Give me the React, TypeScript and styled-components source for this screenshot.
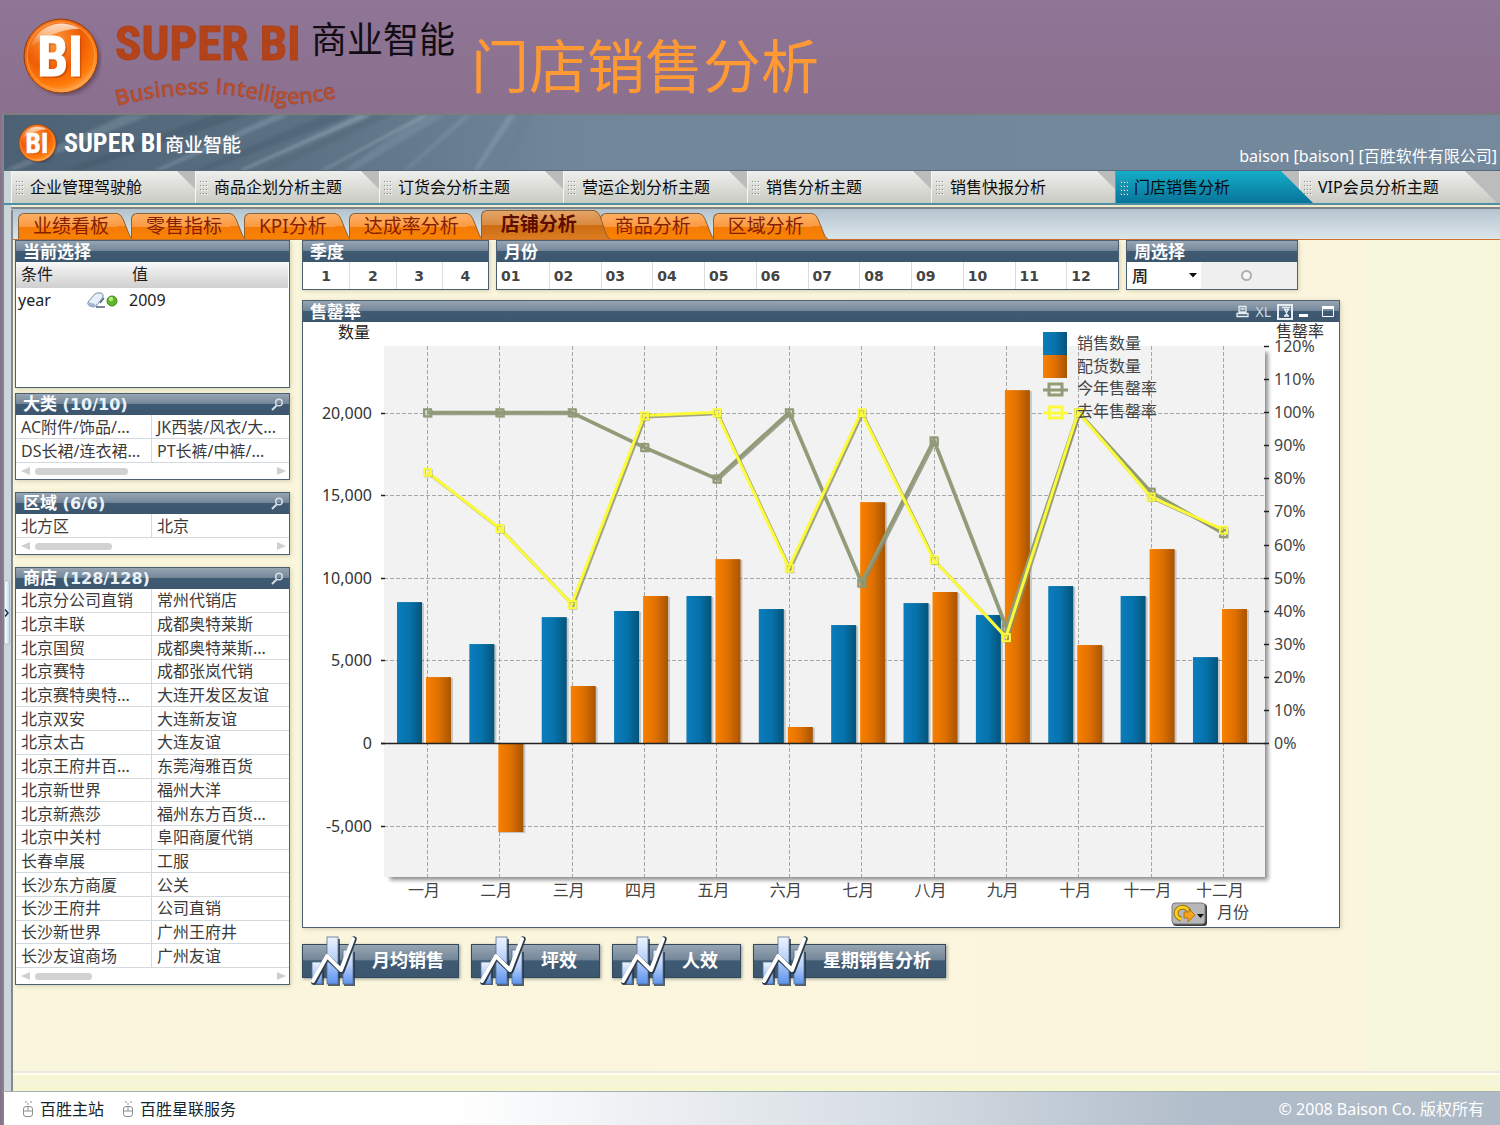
import React from "react";
import styled, { createGlobalStyle } from "styled-components";

const SANS = '"Noto Sans", "Noto Sans CJK SC", sans-serif';
const BOLD_SANS = '"DejaVu Sans", "Noto Sans CJK SC", sans-serif';
const CONDENSED =
  '"Roboto Condensed", "Liberation Sans Narrow", "DejaVu Sans Condensed", sans-serif';

const GlobalStyle = createGlobalStyle`
  *, *::before, *::after { box-sizing: border-box; }
  body { margin: 0; background: #8b7090; font: 16px/24px ${SANS}; color: #333; }
  button, select, input { font: inherit; color: inherit; margin: 0; }
  button { border: 0; padding: 0; background: none; cursor: pointer; }
  ul { list-style: none; margin: 0; padding: 0; }
  svg { display: block; }
`;

const Page = styled.div`
  display: flex;
  flex-direction: column;
  min-height: 100vh;
`;

/* ---------- Title strip ---------- */

const Hero = styled.header`
  display: flex;
  height: 113px;
  padding: 16px 22px 0;
  background: linear-gradient(#8f7696, #8b6f8e);
`;

const Brand = styled.div`
  display: flex;
  flex-direction: column;
  margin-left: 13px;
  width: 356px;
`;

const BrandRow = styled.div`
  display: flex;
  align-items: flex-start;
  height: 57px;
`;

const BrandName = styled.div`
  width: 196px;
  font: bold 49px/56px ${CONDENSED};
  color: #b5431a;
  white-space: nowrap;
  -webkit-text-stroke: 1px #a8421f;
`;

const BrandChinese = styled.div`
  font-size: 36px;
  line-height: 48px;
  color: #120c14;
  white-space: nowrap;
`;

const TaglineSvg = styled.svg`
  overflow: visible;
`;

const HeroTitle = styled.h1`
  margin: 16px 0 0;
  font-family: ${SANS};
  font-size: 58px;
  line-height: 68px;
  font-weight: 400;
  color: #ff9933;
  white-space: nowrap;
`;

/* ---------- Application frame ---------- */

const Frame = styled.div`
  display: flex;
  flex-direction: column;
  flex: 1;
  margin-left: 2px;
  border-top: 2px solid #7d7d80;
  border-left: 2px solid #808589;
  background: #ccd5da;
  overflow: hidden;
`;

const Banner = styled.div`
  position: relative;
  display: flex;
  align-items: center;
  height: 56px;
  padding: 0 3px 0 14px;
  background: linear-gradient(90deg, #4c6173, #5c7183 20%, #71869a 38%, #74899c);
  border-bottom: 1px solid #566b80;
`;

const Streaks = styled.svg`
  position: absolute;
  inset: 0;
  width: 640px;
  height: 55px;
`;

const BannerBrand = styled.div`
  position: relative;
  display: flex;
  align-items: center;
  flex: 1;
  color: #fff;
`;

const BannerName = styled.span`
  width: 101px;
  margin-left: 6px;
  font: bold 26px/36px ${CONDENSED};
  white-space: nowrap;
`;

const BannerChinese = styled.span`
  font-size: 19px;
  font-weight: 500;
  line-height: 24px;
  padding-top: 4px;
`;

const UserInfo = styled.span`
  position: relative;
  align-self: flex-end;
  padding-bottom: 2px;
  color: #fff;
  white-space: nowrap;
`;

const MainNav = styled.nav`
  display: flex;
  height: 34px;
  padding-left: 7px;
  background: linear-gradient(90deg, #ccd5da 7px, #bcbcbc 7px);
  border-bottom: 2px solid #4d8fa8;
  overflow: hidden;
`;

const NavTab = styled.button<{ $active?: boolean }>`
  position: relative;
  z-index: ${(p) => (p.$active ? 1 : 0)};
  display: flex;
  align-items: center;
  gap: 5px;
  flex: 0 0 198px;
  margin-right: -14px;
  padding-left: 4px;
  color: #0a0a0a;
  text-align: left;
  white-space: nowrap;
  border-left: 1px solid ${(p) => (p.$active ? "#2cb4cc" : "#f6f6f4")};
  background: ${(p) =>
    p.$active ? "linear-gradient(#14aec8, #0b7fa3 80%, #08759a)" : "linear-gradient(#eff0ec, #c9cac2)"};
  clip-path: polygon(0 0, 166px 0, 100% 100%, 0 100%);
`;

const NavRule = styled.div`
  height: 5px;
  margin-left: 7px;
  background: linear-gradient(#f4ecc8 2px, #7f858c 2px, #7f858c 4px, #b3c1cc 4px);
`;

const Body = styled.div`
  display: flex;
  flex: 1;
`;

const Rail = styled.div`
  display: flex;
  align-items: flex-start;
  width: 7px;
  padding-top: 370px;
`;

const RailHandle = styled.button`
  display: flex;
  align-items: center;
  width: 6px;
  height: 65px;
  border-radius: 3px;
  border: 1px solid #b9c0c6;
  background: linear-gradient(90deg, #fff, #c4def2);
`;

const Workspace = styled.div`
  display: flex;
  flex-direction: column;
  flex: 1;
  min-width: 0;
  border-left: 2px solid #868a8e;
`;

const SubTabs = styled.div`
  display: flex;
  align-items: flex-end;
  height: 30px;
  padding-left: 5px;
  background: linear-gradient(#b5c5d0, #dce6ea);
  border-bottom: 1px solid #d0702a;
`;

const tabFill = (active?: boolean) =>
  active
    ? "linear-gradient(#e3a468, #d98a3e 50%, #cb6c14 52%, #dd7d20)"
    : "linear-gradient(#fdb067, #fb9a41 50%, #f57b08 52%, #f98200)";

const SubTab = styled.button<{ $active?: boolean }>`
  position: relative;
  z-index: ${(p) => (p.$active ? 1 : 0)};
  display: flex;
  height: ${(p) => (p.$active ? 29 : 26)}px;
  margin-right: ${(p) => (p.$active ? -10 : -2)}px;
  font-size: 19px;
  line-height: 24px;
  font-weight: ${(p) => (p.$active ? 700 : 400)};
  color: ${(p) => (p.$active ? "#5c0d00" : "#861f00")};
  white-space: nowrap;
`;

const SubTabLabel = styled.span<{ $active?: boolean }>`
  height: 100%;
  padding: ${(p) => (p.$active ? "1px 17px 0 19px" : "0 8px 0 14px")};
  border: 1px solid #8a6238;
  border-width: 1px 0 0 1px;
  border-radius: 6px 0 0 0;
  background: ${(p) => tabFill(p.$active)};
`;

const Content = styled.main`
  display: flex;
  align-items: flex-start;
  gap: 12px;
  flex: 1;
  padding: 0 16px 80px 2px;
  background: linear-gradient(90deg, #faf6dc, #fbf5dd 1345px, #f4f7da 1365px);
`;

/* ---------- Panels ---------- */

const panelFill = "linear-gradient(#98a5b2, #75889a 45%, #3f5a73 50%, #3c566e)";

const PanelBox = styled.section`
  border: 1px solid #4b6073;
  background: #fff;
  box-shadow: 1px 1px 4px rgba(120, 120, 80, 0.3);
`;

const PanelHead = styled.div`
  display: flex;
  align-items: center;
  justify-content: space-between;
  height: 21px;
  padding: 0 5px 0 7px;
  background: ${panelFill};
  color: #fff;
`;

const PanelTitle = styled.h2`
  margin: 0;
  font: bold 17px/20px ${BOLD_SANS};
  white-space: nowrap;
`;

const Count = styled.span`
  font-size: 16px;
  color: #e9f2f8;
`;

const Tools = styled.div`
  display: flex;
  align-items: center;
  gap: 6px;
`;

const Sidebar = styled.aside`
  display: flex;
  flex-direction: column;
  flex: 0 0 275px;
  gap: 12px;
`;

const SideGroup = styled.div`
  display: flex;
  flex-direction: column;
  gap: 5px;
`;

const CurrentBody = styled.div`
  height: 125px;
  color: #1c1c1c;
`;

const CurrentTable = styled.table`
  width: 272px;
  border-collapse: collapse;
  table-layout: fixed;

  th {
    height: 26px;
    padding: 0 0 2px 5px;
    font-weight: 400;
    line-height: 22px;
    text-align: left;
  }
  thead tr { background: linear-gradient(#f8f8f8, #cfcfcf); }
  td { padding: 0 0 0 2px; height: 24px; }
`;

const YearRow = styled.div`
  display: flex;
  align-items: center;
  justify-content: space-between;
  padding-right: 9px;
`;

const ListGrid = styled.ul<{ $height?: number }>`
  display: grid;
  grid-template-columns: 136px 1fr;
  grid-auto-rows: ${(p) => (p.$height ? "minmax(0, 1fr)" : "24px")};
  height: ${(p) => (p.$height ? `${p.$height}px` : "auto")};
`;

const ListItem = styled.li`
  display: flex;
  align-items: center;
  padding-left: 5px;
  border-bottom: 1px solid #d3dadd;
  white-space: nowrap;
  overflow: hidden;
  color: #3b3b3b;

  &:nth-child(odd) { border-right: 1px solid #d3dadd; }
`;

const ScrollRow = styled.div`
  display: flex;
  align-items: center;
  gap: 5px;
  height: 16px;
  padding: 0 3px 0 5px;
`;

const Thumb = styled.span<{ $size: number }>`
  width: ${(p) => p.$size}px;
  height: 7px;
  margin-right: auto;
  border-radius: 4px;
  background: #d2d2d2;
`;

const Main = styled.div`
  flex: 1 1 auto;
  min-width: 0;
  max-width: 1038px;
`;

const Filters = styled.div`
  display: grid;
  grid-template-columns: 187px minmax(0, 623px) 172px;
  gap: 7px;
  margin-bottom: 10px;
`;

const Cells = styled.div<{ $count: number }>`
  display: grid;
  grid-template-columns: repeat(${(p) => p.$count}, minmax(0, 1fr));
  height: 27px;
`;

const Cell = styled.button<{ $center?: boolean }>`
  padding-left: ${(p) => (p.$center ? 0 : 4)}px;
  font: bold 14px/24px ${BOLD_SANS};
  text-align: ${(p) => (p.$center ? "center" : "left")};
  color: #444;

  & + & { border-left: 1px solid #d9dde0; }
`;

const WeekRow = styled.div`
  display: grid;
  grid-template-columns: 74px 1fr;
  height: 27px;
`;

const WeekSelectBox = styled.label`
  display: flex;
  align-items: center;
  padding-right: 4px;
`;

const WeekSelect = styled.select`
  flex: 1;
  min-width: 0;
  appearance: none;
  border: 0;
  padding: 0 0 0 5px;
  background: none;
  font-weight: 500;
  color: #222;
`;

const RadioCell = styled.label`
  display: flex;
  align-items: center;
  justify-content: center;
  padding-right: 6px;
  background: #efefef;
`;

const Radio = styled.input`
  appearance: none;
  width: 11px;
  height: 11px;
  border: 2px solid #aeb0b0;
  border-radius: 50%;
  background: #f8f8f8;
`;

const ExcelButton = styled.button`
  font-size: 14px;
  line-height: 18px;
  color: #cdd7df;
`;

const ChartSvg = styled.svg`
  width: 100%;
  height: auto;
  overflow: visible;
  font-family: ${SANS};
  font-size: 16px;
`;

const Actions = styled.div`
  display: flex;
  flex-wrap: wrap;
  gap: 12px;
  margin-top: 16px;
`;

const ActionButton = styled.button`
  position: relative;
  min-width: 129px;
  height: 34px;
  padding: 0 14px 2px 69px;
  border: 1px solid #33495c;
  background: ${panelFill};
  box-shadow: 1px 1px 3px rgba(80, 90, 100, 0.6);
  color: #fff;
  font-size: 18px;
  font-weight: 700;
  line-height: 24px;
  text-align: left;
  white-space: nowrap;
`;

const ActionIcon = styled.svg`
  position: absolute;
  left: 5px;
  top: -9px;
`;

const LowerBand = styled.div`
  height: 20px;
  border-top: 2px solid #e9e9e4;
  background: linear-gradient(#fffdf0 1px, #f5f6d0 3px, #f6f5dc 9px, #f5f7cb);
`;

const Footer = styled.footer`
  display: flex;
  align-items: center;
  gap: 18px;
  height: 34px;
  margin-left: 2px;
  padding: 0 16px 0 18px;
  border-top: 1px solid #a7b0b4;
  border-left: 2px solid #808589;
  background: linear-gradient(90deg, #fff 30%, #d5dce3 60%, #b1bdca 80%, #adbac6);
`;

const FooterLink = styled.a`
  display: flex;
  align-items: center;
  gap: 6px;
  color: #13262f;
  text-decoration: none;
`;

const Copyright = styled.span`
  margin-left: auto;
  color: #fff;
`;

/* ---------- Drawings ---------- */

function Badge({ size, id }: { size: number; id: string }) {
  return (
    <svg width={size} height={size} viewBox="0 0 80 80" role="img" aria-label="BI">
      <defs>
        <radialGradient id={`${id}-fill`} cx="0.4" cy="0.3" r="0.7">
          <stop offset="0" stopColor="#ff9a3a" />
          <stop offset="0.55" stopColor="#ee5d06" />
          <stop offset="0.85" stopColor="#ff7c0a" />
          <stop offset="1" stopColor="#ffa046" />
        </radialGradient>
        <linearGradient id={`${id}-shine`} x1="0" y1="0" x2="0" y2="1">
          <stop offset="0" stopColor="#fff" stopOpacity="0.75" />
          <stop offset="1" stopColor="#fff" stopOpacity="0" />
        </linearGradient>
        <filter id={`${id}-soft`} x="-20%" y="-20%" width="140%" height="140%">
          <feGaussianBlur stdDeviation="2" />
        </filter>
      </defs>
      <circle cx="42" cy="43" r="36" fill="#3a2030" opacity="0.5" filter={`url(#${id}-soft)`} />
      <circle cx="39" cy="40" r="37" fill={`url(#${id}-fill)`} stroke="#8f3f10" strokeWidth="1" />
      <circle cx="39" cy="40" r="34" fill="none" stroke="#ffb066" strokeWidth="1.5" opacity="0.5" />
      <path d="M8 32 A33 33 0 0 1 58 13 Q34 12 8 32Z" fill={`url(#${id}-shine)`} />
      <text x="40" y="62" fontSize="55" fontWeight="bold" textAnchor="middle" fill="#b83c00" opacity="0.5" fontFamily={CONDENSED}>
        BI
      </text>
      <text x="38" y="60" fontSize="55" fontWeight="bold" textAnchor="middle" fill="#fff" stroke="#fff" fontFamily={CONDENSED}>
        BI
      </text>
    </svg>
  );
}

function Tagline() {
  return (
    <TaglineSvg width="240" height="40" viewBox="0 0 240 40">
      <path id="tagline-wave" d="M2 33 C36 24 66 21 100 21 C130 22 148 30 175 31 C195 31 210 28 240 20" fill="none" />
      <text fontFamily='"Open Sans", "Noto Sans", sans-serif' fontSize="22" fontWeight="600" fill="#c24f22" stroke="#7c4a5c" strokeWidth="0.4">
        <textPath href="#tagline-wave">Business Intelligence</textPath>
      </text>
    </TaglineSvg>
  );
}

function BannerStreaks() {
  const lines: [number, number, number, string, number][] = [
    [0, 26, 120, "#8ea4b5", 0.35],
    [60, 34, 150, "#3d5060", 0.35],
    [150, 16, 120, "#9ab0c2", 0.35],
    [190, 30, 130, "#40566a", 0.35],
    [235, 12, 120, "#a5b9ca", 0.45],
    [258, 20, 110, "#4a6074", 0.35],
    [318, 6, 100, "#a9bccb", 0.5],
    [340, 22, 80, "#879cb0", 0.35],
    [400, 8, 60, "#8fa4b6", 0.3],
    [470, 8, 34, "#93a8b9", 0.4],
    [494, 10, 26, "#64798c", 0.3],
  ];
  return (
    <Streaks viewBox="0 0 640 55" aria-hidden="true">
      <filter id="streak-soft">
        <feGaussianBlur stdDeviation="1.5" />
      </filter>
      <g filter="url(#streak-soft)">
        {lines.map(([x, w, slope, color, opacity]) => (
          <path key={x} d={`M${x} 55 L${x + slope} 0 H${x + slope + w} L${x + w / 2} 55Z`} fill={color} opacity={opacity} />
        ))}
      </g>
    </Streaks>
  );
}

const Grip = () => (
  <svg width="9" height="15" viewBox="0 0 9 15" aria-hidden="true">
    {[0, 3, 6].map((x) =>
      [1, 5, 9, 13].map((y) => (
        <g key={`${x}-${y}`}>
          <rect x={x} y={y} width="1" height="1" fill="#8c8c88" />
          <rect x={x + 1} y={y + 1} width="1" height="1" fill="#fff" />
        </g>
      ))
    )}
  </svg>
);

function Slant({ active }: { active?: boolean }) {
  const id = active ? "slant-active" : "slant";
  const h = active ? 29 : 26;
  const c = active ? ["#e3a468", "#d98a3e", "#cb6c14", "#dd7d20"] : ["#fdb067", "#fb9a41", "#f57b08", "#f98200"];
  return (
    <svg width="16" height={h} viewBox={`0 0 16 ${h}`} aria-hidden="true">
      <linearGradient id={id} x1="0" y1="0" x2="0" y2="1">
        <stop offset="0" stopColor={c[0]} />
        <stop offset="0.5" stopColor={c[1]} />
        <stop offset="0.52" stopColor={c[2]} />
        <stop offset="1" stopColor={c[3]} />
      </linearGradient>
      <path d={`M0 0 Q4 1 6 6 L12 ${h - 5} Q13 ${h - 1} 16 ${h} H0Z`} fill={`url(#${id})`} />
      <path d={`M0 0.5 Q4 1 6 6 L12 ${h - 5} Q13 ${h - 1} 16 ${h}`} fill="none" stroke="#8a6238" />
    </svg>
  );
}

const SearchIcon = () => (
  <svg width="13" height="13" viewBox="0 0 13 13" aria-hidden="true">
    <circle cx="8" cy="4.5" r="3.3" fill="none" stroke="#d6dfe7" strokeWidth="1.5" />
    <path d="M5.5 7.5 L1 12" stroke="#d6dfe7" strokeWidth="2" />
  </svg>
);

const Arrow = ({ left }: { left?: boolean }) => (
  <svg width="9" height="8" viewBox="0 0 9 8" aria-hidden="true">
    <path d={left ? "M9 0 L0 4 L9 8Z" : "M0 0 L9 4 L0 8Z"} fill="#cfcfcf" />
  </svg>
);

const Eraser = () => (
  <svg width="31" height="17" viewBox="0 0 31 17" aria-hidden="true">
    <path d="M1 10 L8 2 Q9 1 11 1 L14 1 Q17 2 16 5 L10 13 Q8 15 6 15 L3 14 Q0 13 1 10Z" fill="#e9eff8" stroke="#7189a8" />
    <path d="M1 10 L8 12 L8 15 L3 14Z" fill="#a3b6d2" />
    <path d="M9 15 H18 M13 11 L17 6" stroke="#4c6078" strokeWidth="1.3" fill="none" />
    <circle cx="25" cy="9" r="5" fill="#5fb52a" stroke="#3f8b1b" />
    <circle cx="24" cy="7" r="2.2" fill="#b4ea86" />
  </svg>
);

const MouseIcon = () => (
  <svg width="12" height="16" viewBox="0 0 12 16" fill="none" stroke="#8a8f92" aria-hidden="true">
    <path d="M3 1 H6 M8 1 H10 M6 2 V5" strokeDasharray="2 1" />
    <path d="M1.5 8 Q1.5 5.5 4 5.5 H8 Q10.5 5.5 10.5 8 V13 Q10.5 15.5 8 15.5 H4 Q1.5 15.5 1.5 13Z M1.5 10 H10.5 M6 5.5 V10" />
  </svg>
);

function StatsIcon() {
  return (
    <ActionIcon width="56" height="52" viewBox="0 0 54 52" aria-hidden="true">
      <defs>
        <linearGradient id="stat-bar" x1="0" y1="0" x2="0" y2="1">
          <stop offset="0" stopColor="#eef4ff" />
          <stop offset="0.5" stopColor="#b4cdf8" />
          <stop offset="1" stopColor="#5c93ef" />
        </linearGradient>
      </defs>
      <g fill="#1e2f45" opacity="0.75">
        <rect x="4" y="28" width="11" height="21" />
        <rect x="19" y="3" width="12" height="47" />
        <rect x="35" y="16" width="11" height="34" />
      </g>
      <g fill="url(#stat-bar)" stroke="#56708f" strokeWidth="0.8">
        <rect x="3" y="26" width="10" height="22" />
        <rect x="18" y="1" width="11" height="47" />
        <rect x="34" y="14" width="10" height="34" />
      </g>
      <path d="M5 46 L18 21 L33 35 L45 3" fill="none" stroke="#2d3a48" strokeWidth="5.5" strokeLinecap="round" strokeLinejoin="round" />
      <path d="M4 45 L18 20 L32 34 L44 3" fill="none" stroke="#fff" strokeWidth="4" strokeLinecap="round" strokeLinejoin="round" />
    </ActionIcon>
  );
}

/* ---------- Chart ---------- */

const MONTHS = ["一月", "二月", "三月", "四月", "五月", "六月", "七月", "八月", "九月", "十月", "十一月", "十二月"];
const SOLD = [8530, 5990, 7620, 7990, 8900, 8110, 7140, 8470, 7750, 9500, 8900, 5200];
const SHIPPED = [3990, -5390, 3450, 8900, 11130, 970, 14580, 9140, 21360, 5930, 11740, 8110];
const THIS_YEAR = [100, 100, 100, 89.5, 80, 100, 48.5, 91.5, 35, 100, 76, 63.5];
const LAST_YEAR = [82, 65, 42, 99, 100, 53, 100, 55.5, 32, 100, 74.5, 64.5];

const ZERO = 421;
const monthX = (i: number) => 124 + i * 72.36;
const qtyY = (v: number) => ZERO - v * 0.01652;
const rateY = (v: number) => ZERO - v * 3.308;
const points = (rates: number[]) => rates.map((r, i) => `${monthX(i)},${rateY(r)}`).join(" ");

function Bar({ x, value, fill }: { x: number; value: number; fill: string }) {
  const top = Math.min(qtyY(value), ZERO);
  const height = Math.abs(qtyY(value) - ZERO);
  return (
    <>
      <rect x={x + 1} y={top + 1} width="26" height={height} fill="#000" opacity="0.18" />
      <rect x={x} y={top} width="25" height={height} fill={fill} />
    </>
  );
}

function Line({ rates, color, shadow, width }: { rates: number[]; color: string; shadow: string; width: number }) {
  return (
    <g fill="none">
      <polyline points={points(rates)} stroke={shadow} strokeWidth={width} transform="translate(1.5 1.5)" opacity="0.8" />
      <polyline points={points(rates)} stroke={color} strokeWidth={width} />
      {rates.map((r, i) => (
        <g key={i}>
          <rect x={monthX(i) - 2} y={rateY(r) - 2} width="7" height="7" stroke={shadow} opacity="0.7" />
          <rect x={monthX(i) - 3} y={rateY(r) - 3} width="7" height="7" stroke={color} strokeWidth="2" />
        </g>
      ))}
    </g>
  );
}

function Chart() {
  return (
    <ChartSvg viewBox="0 0 1036 605" role="img" aria-label="售罄率">
      <defs>
        <linearGradient id="blue">
          <stop offset="0" stopColor="#0a7dbc" />
          <stop offset="0.5" stopColor="#0672ac" />
          <stop offset="1" stopColor="#045479" />
        </linearGradient>
        <linearGradient id="orange">
          <stop offset="0" stopColor="#f98000" />
          <stop offset="0.5" stopColor="#df7000" />
          <stop offset="1" stopColor="#a85400" />
        </linearGradient>
        <filter id="plot-shadow" x="-5%" y="-5%" width="110%" height="110%">
          <feGaussianBlur stdDeviation="2" />
        </filter>
      </defs>
      <rect x="87" y="30" width="878" height="528" fill="#000" opacity="0.45" filter="url(#plot-shadow)" />
      <rect x="81" y="24" width="881" height="531" fill="#f2f2f2" />

      <g stroke="#a6a6a6" strokeDasharray="4 2">
        {[20000, 15000, 10000, 5000, -5000].map((v) => (
          <path key={v} d={`M81 ${Math.round(qtyY(v)) + 0.5} H962`} />
        ))}
        {MONTHS.map((m, i) => (
          <path key={m} d={`M${Math.round(monthX(i)) + 0.5} 24 V555`} />
        ))}
      </g>

      {MONTHS.map((m, i) => (
        <g key={m}>
          <Bar x={monthX(i) - 30} value={SOLD[i]} fill="url(#blue)" />
          <Bar x={monthX(i) - 1} value={SHIPPED[i]} fill="url(#orange)" />
        </g>
      ))}
      <path d={`M78 ${ZERO + 0.5} H962`} stroke="#222" strokeWidth="1.5" />

      <Line rates={THIS_YEAR} color="#919b76" shadow="#858c74" width={3} />
      <Line rates={LAST_YEAR} color="#fbfb3c" shadow="#8f9068" width={3} />

      <g fill="#333" textAnchor="end">
        {[20000, 15000, 10000, 5000, 0, -5000].map((v) => (
          <g key={v}>
            <text x="69" y={qtyY(v) + 6}>{v.toLocaleString("en-US")}</text>
            <path d={`M78 ${Math.round(qtyY(v)) + 0.5} h4`} stroke="#222" strokeWidth="1.5" />
          </g>
        ))}
      </g>
      <g fill="#444">
        {[120, 110, 100, 90, 80, 70, 60, 50, 40, 30, 20, 10, 0].map((v) => (
          <g key={v}>
            <text x="971" y={rateY(v) + 6}>{v}%</text>
            <path d={`M961 ${Math.round(rateY(v)) + 0.5} h5`} stroke="#222" strokeWidth="1.5" />
          </g>
        ))}
      </g>
      <g fill="#444" textAnchor="middle">
        {MONTHS.map((m, i) => (
          <text key={m} x={monthX(i) - 3} y="574">{m}</text>
        ))}
      </g>
      <text x="35" y="16" fill="#222">数量</text>
      <text x="973" y="15" fill="#333">售罄率</text>
      <text x="914" y="596" fill="#444">月份</text>

      <rect x="740" y="10" width="24" height="23" fill="url(#blue)" />
      <rect x="740" y="33" width="24" height="23" fill="url(#orange)" />
      <g fill="none" strokeWidth="3">
        <path d="M740 68 h25" stroke="#919b76" />
        <rect x="746" y="62" width="13" height="11" stroke="#919b76" />
        <path d="M740 91 h25" stroke="#fbfb3c" />
        <rect x="746" y="85" width="13" height="11" stroke="#fbfb3c" />
      </g>
      <g fill="#444">
        <text x="774" y="27">销售数量</text>
        <text x="774" y="50">配货数量</text>
        <text x="774" y="72">今年售罄率</text>
        <text x="774" y="95">去年售罄率</text>
      </g>

      <rect x="870" y="582" width="34" height="22" rx="3" fill="#3d3d40" />
      <rect x="869" y="581" width="33" height="21" rx="3" fill="#b7b7ba" stroke="#77777c" />
      <path d="M886 590 A6.500 6 0 1 0 878 597" fill="none" stroke="#9a7200" strokeWidth="5" />
      <path d="M886 590 A6.500 6 0 1 0 878 597" fill="none" stroke="#f8d024" strokeWidth="3" />
      <path d="M881 590 H886 V587 L892 593 L885 600 V596 H881Z" fill="#f5a31c" stroke="#9a6200" strokeWidth="0.7" />
      <path d="M894 592 h7 l-3.500 4Z" fill="#111" />
    </ChartSvg>
  );
}

/* ---------- Page parts ---------- */

const NAV = ["企业管理驾驶舱", "商品企划分析主题", "订货会分析主题", "营运企划分析主题", "销售分析主题", "销售快报分析", "门店销售分析", "VIP会员分析主题"];
const SUB = ["业绩看板", "零售指标", "KPI分析", "达成率分析", "店铺分析", "商品分析", "区域分析"];
const CATEGORIES = ["AC附件/饰品/...", "JK西装/风衣/大...", "DS长裙/连衣裙...", "PT长裤/中裤/..."];
const REGIONS = ["北方区", "北京"];
const STORES = [
  "北京分公司直销", "常州代销店",
  "北京丰联", "成都奥特莱斯",
  "北京国贸", "成都奥特莱斯...",
  "北京赛特", "成都张岚代销",
  "北京赛特奥特...", "大连开发区友谊",
  "北京双安", "大连新友谊",
  "北京太古", "大连友谊",
  "北京王府井百...", "东莞海雅百货",
  "北京新世界", "福州大洋",
  "北京新燕莎", "福州东方百货...",
  "北京中关村", "阜阳商厦代销",
  "长春卓展", "工服",
  "长沙东方商厦", "公关",
  "长沙王府井", "公司直销",
  "长沙新世界", "广州王府井",
  "长沙友谊商场", "广州友谊",
];

function Panel({ title, count, tools, children }: { title: string; count?: string; tools?: React.ReactNode; children: React.ReactNode }) {
  return (
    <PanelBox>
      <PanelHead>
        <PanelTitle>
          {title}
          {count && <Count> ({count})</Count>}
        </PanelTitle>
        {tools && <Tools>{tools}</Tools>}
      </PanelHead>
      {children}
    </PanelBox>
  );
}

function ListPanel({ title, count, items, thumb, height }: { title: string; count: string; items: string[]; thumb: number; height?: number }) {
  return (
    <Panel title={title} count={count} tools={<button aria-label="搜索"><SearchIcon /></button>}>
      <ListGrid $height={height}>
        {items.map((item) => (
          <ListItem key={item}>{item}</ListItem>
        ))}
      </ListGrid>
      <ScrollRow>
        <Arrow left />
        <Thumb $size={thumb} />
        <Arrow />
      </ScrollRow>
    </Panel>
  );
}

const ChartTools = () => (
  <>
    <button aria-label="打印">
      <svg width="13" height="13" viewBox="0 0 13 13" fill="none" stroke="#e6edf2" strokeWidth="1.3">
        <path d="M3 1.500 H10 V7 H3Z M4.500 4 H8.500 M1 8.500 H12 V11.500 H1Z M3 7 V8 M10 7 V8" />
      </svg>
    </button>
    <ExcelButton>XL</ExcelButton>
    <button aria-label="复制">
      <svg width="16" height="16" viewBox="0 0 16 16" fill="none" stroke="#e6edf2">
        <rect x="1" y="1" width="14" height="14" strokeWidth="2" />
        <path d="M5 3.500 H13 M7 5.500 H12 M7 12 H12 M8 6 L11 12 M11 6 L8 12" strokeWidth="1.300" />
      </svg>
    </button>
    <button aria-label="最小化">
      <svg width="10" height="13" viewBox="0 0 10 13"><rect y="9" width="9" height="3" fill="#fff" /></svg>
    </button>
    <button aria-label="最大化">
      <svg width="19" height="13" viewBox="0 0 19 13">
        <path d="M7.500 1.500 H18.500 V11.500 H7.500Z" fill="none" stroke="#fff" />
        <rect x="7" y="1" width="12" height="3" fill="#fff" />
      </svg>
    </button>
  </>
);

export default function App() {
  return (
    <Page>
      <GlobalStyle />
      <Hero>
        <Badge size={80} id="hero" />
        <Brand>
          <BrandRow>
            <BrandName>SUPER BI</BrandName>
            <BrandChinese>商业智能</BrandChinese>
          </BrandRow>
          <Tagline />
        </Brand>
        <HeroTitle>门店销售分析</HeroTitle>
      </Hero>

      <Frame>
        <Banner>
          <BannerStreaks />
          <BannerBrand>
            <Badge size={40} id="banner" />
            <BannerName>SUPER BI</BannerName>
            <BannerChinese>商业智能</BannerChinese>
          </BannerBrand>
          <UserInfo>baison [baison] [百胜软件有限公司]</UserInfo>
        </Banner>
        <MainNav>
          {NAV.map((label) => (
            <NavTab key={label} $active={label === "门店销售分析"}>
              <Grip />
              {label}
            </NavTab>
          ))}
        </MainNav>
        <NavRule />

        <Body>
          <Rail>
            <RailHandle aria-label="展开">
              <svg width="4" height="8" viewBox="0 0 4 8"><path d="M0 0.500 L3 4 L0 7.500" fill="none" stroke="#12304c" strokeWidth="1.500" /></svg>
            </RailHandle>
          </Rail>
          <Workspace>
            <SubTabs>
              {SUB.map((label) => {
                const active = label === "店铺分析";
                return (
                  <SubTab key={label} $active={active}>
                    <SubTabLabel $active={active}>{label}</SubTabLabel>
                    <Slant active={active} />
                  </SubTab>
                );
              })}
            </SubTabs>

            <Content>
              <Sidebar>
                <SideGroup>
                  <Panel title="当前选择">
                    <CurrentBody>
                      <CurrentTable>
                        <colgroup>
                          <col width="111" />
                          <col />
                        </colgroup>
                        <thead>
                          <tr><th>条件</th><th>值</th></tr>
                        </thead>
                        <tbody>
                          <tr>
                            <td><YearRow>year<Eraser /></YearRow></td>
                            <td>2009</td>
                          </tr>
                        </tbody>
                      </CurrentTable>
                    </CurrentBody>
                  </Panel>
                  <ListPanel title="大类" count="10/10" items={CATEGORIES} thumb={93} />
                </SideGroup>
                <ListPanel title="区域" count="6/6" items={REGIONS} thumb={77} />
                <ListPanel title="商店" count="128/128" items={STORES} thumb={57} height={379} />
              </Sidebar>

              <Main>
                <Filters>
                  <Panel title="季度">
                    <Cells $count={4}>
                      {[1, 2, 3, 4].map((q) => <Cell key={q} $center>{q}</Cell>)}
                    </Cells>
                  </Panel>
                  <Panel title="月份">
                    <Cells $count={12}>
                      {MONTHS.map((m, i) => <Cell key={m}>{String(i + 1).padStart(2, "0")}</Cell>)}
                    </Cells>
                  </Panel>
                  <Panel title="周选择">
                    <WeekRow>
                      <WeekSelectBox>
                        <WeekSelect aria-label="周"><option>周</option></WeekSelect>
                        <svg width="8" height="5" viewBox="0 0 8 5"><path d="M0 0 H8 L4 4.500Z" fill="#111" /></svg>
                      </WeekSelectBox>
                      <RadioCell><Radio type="radio" name="week" aria-label="周选择" /></RadioCell>
                    </WeekRow>
                  </Panel>
                </Filters>
                <Panel title="售罄率" tools={<ChartTools />}>
                  <Chart />
                </Panel>
                <Actions>
                  {["月均销售", "坪效", "人效", "星期销售分析"].map((label) => (
                    <ActionButton key={label}><StatsIcon />{label}</ActionButton>
                  ))}
                </Actions>
              </Main>
            </Content>
            <LowerBand />
          </Workspace>
        </Body>
      </Frame>

      <Footer>
        <FooterLink href="#home"><MouseIcon />百胜主站</FooterLink>
        <FooterLink href="#service"><MouseIcon />百胜星联服务</FooterLink>
        <Copyright>© 2008 Baison Co. 版权所有</Copyright>
      </Footer>
    </Page>
  );
}
